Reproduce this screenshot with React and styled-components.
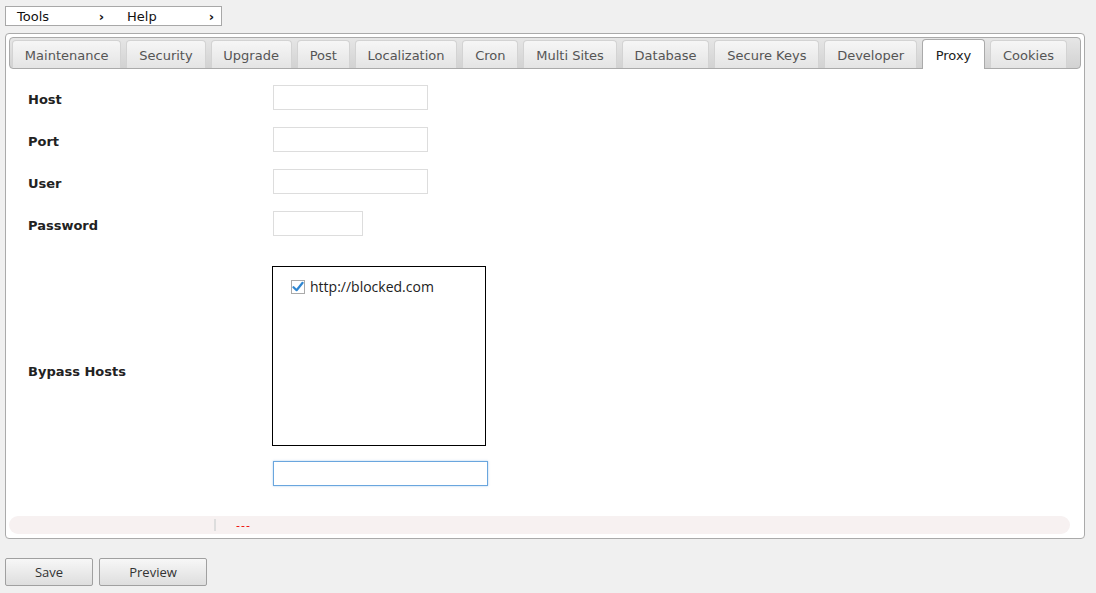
import React from 'react'
import styled, { createGlobalStyle } from 'styled-components'

const GlobalStyle = createGlobalStyle`
  html, body {
    margin: 0;
    padding: 0;
    background: #f0f0f0;
    font-family: "DejaVu Sans", Verdana, sans-serif;
    font-size: 13px;
  }
`

const tabs = ['Maintenance', 'Security', 'Upgrade', 'Post', 'Localization', 'Cron', 'Multi Sites', 'Database', 'Secure Keys', 'Developer', 'Proxy', 'Cookies']

const fields = [
  { label: 'Host', width: 155 },
  { label: 'Port', width: 155 },
  { label: 'User', width: 155 },
  { label: 'Password', width: 90 },
]

function App() {
  return (
    <Page>
      <GlobalStyle />
      <MenuBar>
        <MenuItem $width={110} $right={12}>Tools<Arrow>›</Arrow></MenuItem>
        <MenuItem $right={7}>Help<Arrow>›</Arrow></MenuItem>
      </MenuBar>

      <Panel>
        <TabStrip>
          {tabs.map(t => (
            <Tab key={t} $active={t === 'Proxy'}>{t}</Tab>
          ))}
        </TabStrip>

        <Form>
          {fields.map(f => (
            <Row key={f.label}>
              <Label>{f.label}</Label>
              <TextInput $width={f.width} />
            </Row>
          ))}
          <BypassRow>
            <Label>Bypass Hosts</Label>
            <BypassCol>
              <HostList>
                <HostItem>
                  <CheckBox>
                    <svg width="12" height="12" viewBox="0 0 12 12">
                      <path d="M1.5 6.2 L4.6 9.2 L10.6 1.8" fill="none" stroke="#2f86d1" strokeWidth="2.2" strokeLinecap="round" strokeLinejoin="round" />
                    </svg>
                  </CheckBox>
                  http://blocked.com
                </HostItem>
              </HostList>
              <NewHostInput />
            </BypassCol>
          </BypassRow>
        </Form>

        <StatusBar>
          <StatusCell />
          <StatusText>---</StatusText>
        </StatusBar>
      </Panel>

      <Actions>
        <Button $width={88}>Save</Button>
        <Button $width={108}>Preview</Button>
      </Actions>
    </Page>
  )
}

const Page = styled.div`
  padding: 6px 11px 0 5px;
`

const MenuBar = styled.div`
  display: flex;
  width: 217px;
  height: 20px;
  box-sizing: border-box;
  background: #fff;
  border: 1px solid #a8a8a8;
`

const MenuItem = styled.div`
  ${p => (p.$width ? `width: ${p.$width}px;` : 'flex: 1;')}
  box-sizing: border-box;
  display: flex;
  align-items: center;
  justify-content: space-between;
  padding: 0 ${p => p.$right}px 0 11px;
  color: #111;
  font-size: 13px;
`

const Arrow = styled.span`
  font-size: 13px;
  font-weight: bold;
`

const Panel = styled.div`
  margin-top: 7px;
  width: 1080px;
  box-sizing: border-box;
  background: #fff;
  border: 1px solid #aaa;
  border-radius: 4px;
  padding: 3px 3px 4px 3px;
`

const TabStrip = styled.div`
  display: flex;
  align-items: flex-end;
  gap: 5px;
  height: 32px;
  box-sizing: border-box;
  padding: 0 2px;
  background: linear-gradient(#e6e6e6, #d2d2d2);
  border: 1px solid #aaa;
  border-radius: 4px;
`

const Tab = styled.div`
  height: ${p => (p.$active ? 30 : 28)}px;
  margin-bottom: ${p => (p.$active ? -1 : 0)}px;
  box-sizing: border-box;
  display: flex;
  align-items: center;
  padding: ${p => (p.$active ? '1px 12.85px 0' : '2px 11.85px 0')};
  border: 1px solid ${p => (p.$active ? '#aaa' : '#d3d3d3')};
  border-bottom: none;
  border-radius: 4px 4px 0 0;
  background: ${p => (p.$active ? '#fff' : 'linear-gradient(#f6f6f6, #e4e4e4)')};
  color: ${p => (p.$active ? '#222' : '#555')};
  font-size: 13px;
  white-space: nowrap;
`

const Form = styled.div`
  display: flex;
  flex-direction: column;
  gap: 17px;
  padding: 16px 0 0 19px;
`

const Row = styled.div`
  display: grid;
  grid-template-columns: 245px auto;
  align-items: center;
  & > div:first-child {
    margin-top: 3px;
  }
`

const Label = styled.div`
  font-weight: bold;
  font-size: 13px;
  color: #222;
`

const TextInput = styled.input`
  width: ${p => p.$width}px;
  height: 25px;
  box-sizing: border-box;
  border: 1px solid #ddd;
  outline: none;
  padding: 0 4px;
`

const BypassRow = styled(Row)`
  padding-top: 13px;
  margin-left: -1px;
  & > div:first-child {
    margin-left: 1px;
    margin-top: -9px;
  }
`

const BypassCol = styled.div`
  display: flex;
  flex-direction: column;
  gap: 15px;
`

const HostList = styled.div`
  width: 214px;
  height: 180px;
  box-sizing: border-box;
  border: 1px solid #000;
  padding: 10px 0 0 18px;
`

const HostItem = styled.label`
  display: flex;
  align-items: center;
  gap: 5px;
  font-family: "Open Sans", sans-serif;
  font-size: 14px;
  color: #222;
`

const CheckBox = styled.span`
  width: 14px;
  height: 14px;
  box-sizing: border-box;
  border: 1px solid #aaa;
  background: #fff;
  display: flex;
  align-items: center;
  justify-content: center;
`

const NewHostInput = styled.input`
  width: 215px;
  height: 25px;
  box-sizing: border-box;
  margin-left: 1px;
  border: 1px solid #6aa6de;
  box-shadow: 0 0 2px rgba(90, 155, 220, 0.5);
  outline: none;
`

const StatusBar = styled.div`
  display: flex;
  align-items: center;
  margin-top: 30px;
  width: 1061px;
  height: 18px;
  background: #f7f1f1;
  border-radius: 9px;
`

const StatusCell = styled.div`
  width: 205px;
  height: 12px;
  border-right: 2px solid #ddd;
`

const StatusText = styled.span`
  margin-left: 20px;
  color: #e00;
  font-size: 11px;
  letter-spacing: 1px;
`

const Actions = styled.div`
  display: flex;
  gap: 6px;
  margin-top: 19px;
`

const Button = styled.button`
  width: ${p => p.$width}px;
  height: 28px;
  border: 1px solid #a0a0a0;
  border-radius: 2px;
  background: linear-gradient(#f7f7f7, #dedede);
  font-family: "Open Sans", sans-serif;
  font-size: 13px;
  color: #333;
`

export default App
